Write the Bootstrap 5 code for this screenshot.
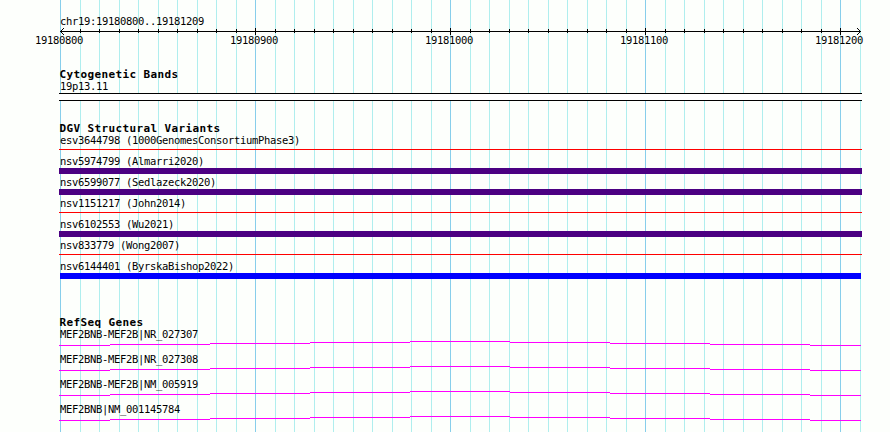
<!DOCTYPE html>
<html lang="en">
<head>
  <meta charset="UTF-8" />
  <meta name="viewport" content="width=device-width, initial-scale=1.0"/>
  <title>chr19:19180800..19181209</title>

  <link href="https://cdn.jsdelivr.net/npm/bootstrap@5.3.6/dist/css/bootstrap.min.css" rel="stylesheet" />

  <style>
    body {
      background-color: #fdfffc;
      color: #000;
      font-family: 'DejaVu Sans Mono', 'Liberation Mono', monospace;
      font-size: 10.5px;
      line-height: 12px;
      letter-spacing: -0.32px;
    }

    /* one line every 10 bp (19.5px), a darker one every 100 bp */
    .tracks {
      width: 803px;
      height: 432px;
      margin-left: 59px;
      padding-top: 15px;
      background-image:
        linear-gradient(90deg, #87ceeb 1px, transparent 1px),
        linear-gradient(90deg, #afeeee 1px, transparent 1px),
        linear-gradient(90deg, #afeeee 1px, transparent 1px);
      background-size: 195px 100%, 39px 100%, 39px 100%;
      background-position: 1px 0, 1px 0, 21px 0;
    }

    .tracks svg {
      display: block;
      overflow: visible;
      shape-rendering: crispEdges;
    }

    .label {
      height: 12px;
      padding-left: 1px;
    }

    .title {
      height: 12px;
      margin: 0;
      padding-left: 0.5px;
      font-size: 11px;
      line-height: 14px;
      font-weight: 700;
      letter-spacing: 0.38px;
    }

    .scale {
      height: 12px;
      margin-left: -24px;
      margin-bottom: 22px;
    }

    .scale span {
      flex: 0 0 195px;
    }

    .scale span:last-child {
      flex-basis: auto;
    }

    .band {
      height: 8px;
      margin: 1px 0 21px;
      border: solid #000;
      border-width: 1px 0;
    }

    .variant {
      height: 21px;
    }

    .loss, .gain, .complex {
      margin-top: 1px;
      height: 6px;
      background-color: #4b0082;
    }

    .loss {
      margin-top: 3px;
      height: 1px;
      background-color: #f00;
    }

    .gain {
      margin-left: 1px;
      margin-right: 1px;
      background-color: #00f;
    }

    .genes {
      margin-top: 35px;
    }

    .gene {
      height: 25px;
    }

    .gene svg {
      margin-top: 1px;
    }
  </style>
</head>

<body class="overflow-hidden">
  <div class="tracks text-nowrap">

    <div class="label">chr19:19180800..19181209</div>
    <svg id="axis" width="803" height="7"></svg>
    <div class="scale d-flex"><span>19180800</span><span>19180900</span><span>19181000</span><span>19181100</span><span>19181200</span></div>

    <h2 class="title">Cytogenetic Bands</h2>
    <div class="label">19p13.11</div>
    <div class="band bg-white"></div>

    <h2 class="title">DGV Structural Variants</h2>
    <div class="variant"><div class="label">esv3644798 (1000GenomesConsortiumPhase3)</div><div class="loss"></div></div>
    <div class="variant"><div class="label">nsv5974799 (Almarri2020)</div><div class="complex"></div></div>
    <div class="variant"><div class="label">nsv6599077 (Sedlazeck2020)</div><div class="complex"></div></div>
    <div class="variant"><div class="label">nsv1151217 (John2014)</div><div class="loss"></div></div>
    <div class="variant"><div class="label">nsv6102553 (Wu2021)</div><div class="complex"></div></div>
    <div class="variant"><div class="label">nsv833779 (Wong2007)</div><div class="loss"></div></div>
    <div class="variant"><div class="label">nsv6144401 (ByrskaBishop2022)</div><div class="gain"></div></div>

    <div class="genes">
      <h2 class="title">RefSeq Genes</h2>
      <div class="gene"><div class="label">MEF2BNB-MEF2B|NR_027307</div><svg class="intron" width="803" height="5"></svg></div>
      <div class="gene"><div class="label">MEF2BNB-MEF2B|NR_027308</div><svg class="intron" width="803" height="5"></svg></div>
      <div class="gene"><div class="label">MEF2BNB-MEF2B|NM_005919</div><svg class="intron" width="803" height="5"></svg></div>
      <div class="gene"><div class="label">MEF2BNB|NM_001145784</div><svg class="intron" width="803" height="5"></svg></div>
    </div>

  </div>

  <script>
    // ruler: baseline, ticks and arrow heads
    let ruler = '<rect x="1" y="4" width="801" height="1"/>';
    for (let k = 1; k <= 40; k++) {
      const x = Math.round(1 + 19.5 * k);
      ruler += k % 10 === 0
        ? `<rect x="${x}" y="1" width="1" height="7"/>`
        : `<rect x="${x}" y="2" width="1" height="4"/>`;
    }
    for (let i = 1; i <= 3; i++) {
      ruler += `<rect x="${1 + i}" y="${4 - i}" width="1" height="1"/><rect x="${1 + i}" y="${4 + i}" width="1" height="1"/>`;
      ruler += `<rect x="${801 - i}" y="${4 - i}" width="1" height="1"/><rect x="${801 - i}" y="${4 + i}" width="1" height="1"/>`;
    }
    document.getElementById('axis').innerHTML = ruler;

    // introns rise one pixel per step towards the middle
    const steps = [0, 51, 151, 251, 351, 451, 551, 651, 751, 802];
    document.querySelectorAll('.intron').forEach(svg => {
      let line = '';
      for (let i = 0; i < 9; i++) {
        line += `<rect x="${steps[i]}" y="${Math.abs(4 - i)}" width="${steps[i + 1] - steps[i]}" height="1" fill="#f0f"/>`;
      }
      svg.innerHTML = line;
    });
  </script>
  <script src="https://cdn.jsdelivr.net/npm/bootstrap@5.3.6/dist/js/bootstrap.bundle.min.js"></script>
</body>
</html>
